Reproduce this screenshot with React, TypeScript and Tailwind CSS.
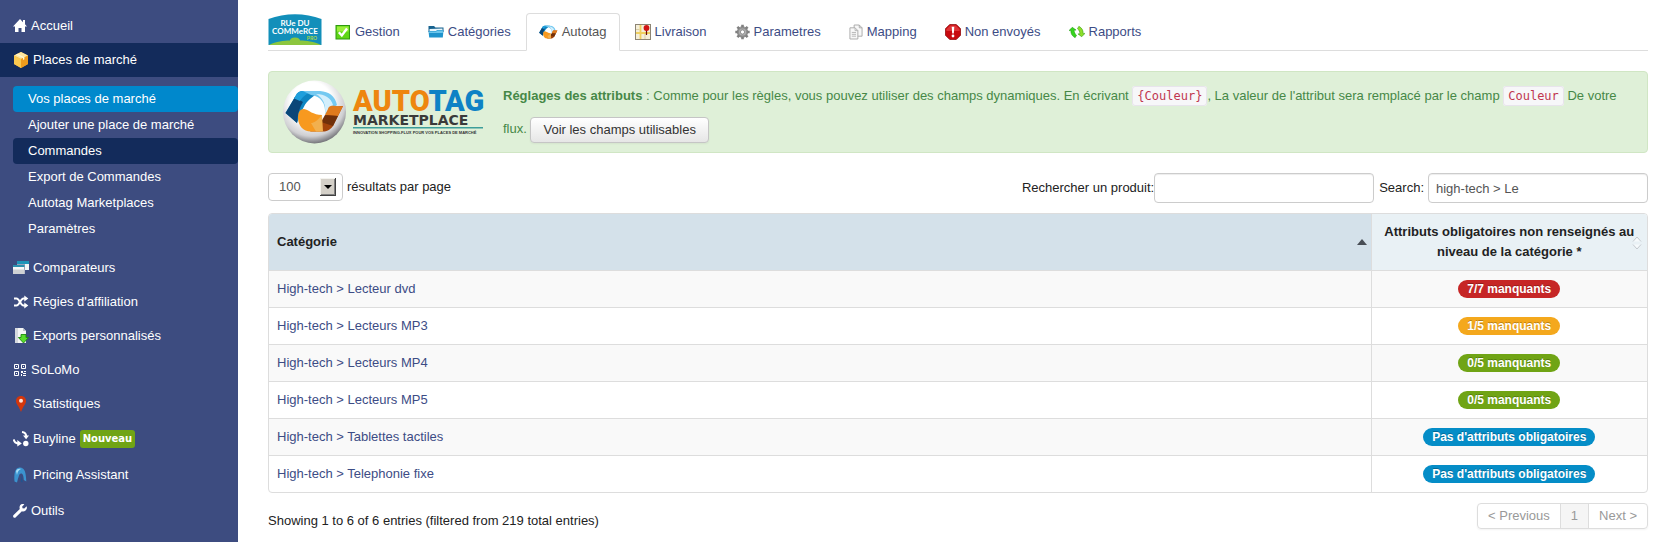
import type { ReactNode } from "react";

/* ---------- icons ---------- */

const HomeIcon = () => (
  <svg width="14" height="14" viewBox="0 0 14 14" fill="#fff">
    <path d="M7 0 10 3.200V1H12V5.300L14 7.500H12V13H8.500V9H5.500V13H2V7.500H0Z" />
  </svg>
);

const BoxIcon = () => (
  <svg width="16" height="16" viewBox="0 0 16 16">
    <path d="M8 0 15 3.4V12L8 16 1 12V3.4Z" fill="#f5b63a" />
    <path d="M8 0 15 3.4 8 7 1 3.4Z" fill="#ffe7a0" />
    <path d="M8 7 15 3.4V12L8 16Z" fill="#ef9c1c" />
    <path d="M1 3.4 8 7V16L1 12Z" fill="#fbc94f" />
    <path d="M4.3 1.8 11.4 5.3V7.3L10 8V6L3 2.5Z" fill="#fff6d2" />
  </svg>
);

const WindowsIcon = () => (
  <svg width="16" height="16" viewBox="0 0 16 16">
    <rect x="4" y="1" width="12" height="9" fill="#f2f5f6" />
    <rect x="4" y="1" width="12" height="3" fill="#1d94b8" />
    <rect x="0" y="4.500" width="12" height="9.500" fill="#3d4c80" />
    <rect x="0" y="5" width="11.500" height="9" fill="#f7f7f7" />
    <rect x="0" y="9.500" width="11.500" height="4.500" fill="#cfd1d3" />
    <rect x="0" y="5" width="11.500" height="2" fill="#2b8fae" />
  </svg>
);

const ShuffleIcon = () => (
  <svg width="16" height="14" viewBox="0 0 16 14" fill="none" stroke="#fff" strokeWidth="1.900">
    <path d="M1 3.500H3.500C6.500 3.500 7.500 10.500 10.500 10.500H12" />
    <path d="M1 10.500H3.500C6.500 10.500 7.500 3.500 10.500 3.500H12" />
    <path d="M11.300 .5 15.300 3.500 11.300 6.500ZM11.300 7.500 15.300 10.500 11.300 13.500Z" fill="#fff" stroke="none" />
  </svg>
);

const ExportIcon = () => (
  <svg width="16" height="16" viewBox="0 0 16 16">
    <path d="M2 0H10L13 3V15H2Z" fill="#f4f5f6" />
    <path d="M2 0H5V15H2Z" fill="#d5d9de" />
    <path d="M10 0 13 3H10Z" fill="#bcc3ca" />
    <path d="M8 6.500H13V9.500H15.600L10.500 15 5.400 9.500H8Z" fill="#58dc2c" stroke="#1d8a0d" strokeWidth="0.900" />
  </svg>
);

const QrIcon = () => (
  <svg width="14" height="14" viewBox="0 0 14 14">
    <path d="M1.500 1.500H5.500V5.500H1.500ZM8.500 1.500H12.500V5.500H8.500ZM1.500 8.500H5.500V12.500H1.500Z" fill="none" stroke="#fff" />
    <path
      d="M3 3H4V4H3ZM10 3H11V4H10ZM3 10H4V11H3ZM8 8H10V10H8ZM11 8H13V9H11ZM10 10H12V11H10ZM8 11H9V13H8ZM10 12H13V13H10ZM12 10H13V11H12Z"
      fill="#fff"
    />
  </svg>
);

const PinIcon = () => (
  <svg width="16" height="16" viewBox="0 0 16 16">
    <path d="M8 0C4.8 0 3 2.300 3 5c0 3.300 3.200 5.400 4.700 10.600h.6C9.800 10.400 13 8.300 13 5c0-2.700-1.800-5-5-5Z" fill="#d2360c" />
    <circle cx="8" cy="4.700" r="2" fill="#fbe3da" />
  </svg>
);

const BuylineIcon = () => (
  <svg width="16" height="16" viewBox="0 0 16 16" fill="none" stroke="#fff" strokeWidth="2">
    <path d="M9 1C12 1.300 13 2.500 13.200 5" />
    <path d="M10 4.500H16L13.100 8.200Z" fill="#fff" stroke="none" />
    <path d="M.8 8.500C1.200 11.500 3 12.300 5 12.500" />
    <path d="M4.300 9V15.500L8.800 12.500Z" fill="#fff" stroke="none" />
    <circle cx="12.800" cy="12.500" r="2.700" fill="#fff" stroke="none" />
  </svg>
);

const PricingIcon = () => (
  <svg width="16" height="16" viewBox="0 0 16 16">
    <path d="M1.500 14.500C1 7 1.500 1 6.500 .5 11.500 .2 13 5 13.300 14.500L10.800 13C10.500 9 10 6.500 8 6.500 6 6.500 6 9.500 5 11.500L4 15.500Z" fill="#3b93cf" />
    <path d="M3 4C4 1.800 6 1.300 8 2 6 2.500 4.500 4.500 4 8Z" fill="#a5dcf5" />
    <path d="M8.500 8 9.700 15.500 7.800 14.500Z" fill="#1d5590" />
  </svg>
);

const WrenchIcon = () => (
  <svg width="14" height="14" viewBox="0 0 14 14" fill="#fff">
    <path d="M13.600 2.300 11.300 4.500 9.500 4.200 9.200 2.600 11.300.4C9.500-.3 7.500.3 6.800 2 6.400 3 6.500 4 6.800 4.900L.6 11.100C-.1 11.800-.1 12.800.6 13.400 1.200 14 2.200 14 2.800 13.300L8.900 7.200C9.900 7.600 11.500 7.500 12.600 6.500 13.900 5.300 14.200 3.700 13.600 2.300Z" />
  </svg>
);

const CheckIcon = () => (
  <svg width="16" height="16" viewBox="0 0 16 16">
    <rect x="1" y="1.500" width="13.500" height="13.500" fill="#5fd616" stroke="#2f9a10" />
    <rect x="2" y="2.500" width="11.500" height="5" fill="#9bef3b" />
    <path d="M3.800 8.300 6.800 11.500 12 4.500" fill="none" stroke="#fff" strokeWidth="2.400" />
  </svg>
);

const FolderIcon = () => (
  <svg width="16" height="16" viewBox="0 0 16 16">
    <path d="M.5 2H6L7.500 3.500H15.500V8H.5Z" fill="#17628f" />
    <path d="M1.500 5 14.500 4.500V8H1.500Z" fill="#e7f5fb" />
    <path d="M.5 7H8L9.200 6H15.500L14.800 13.500H1.200Z" fill="#1f93cc" />
    <path d="M1 7.500H8.200L9.400 6.500H15L14.800 9H1.200Z" fill="#6cc6ec" />
  </svg>
);

const Ribbon = () => (
  <>
    <path d="M31 15 42 35 33 47 18 34Z" fill="#fff" />
    <path d="M2.500 34 14 14.500C16 12.500 18 12 20 12H37L27 20C22 24 19 31 16.500 38L14 44Z" fill="#0f86c2" />
    <path d="M2.500 34 12 18 20 23C17 28 15 33 14 44Z" fill="#0b4678" />
    <path d="M14 14.500C16 12.500 18 12 20 12H33C25 13 20 17 17 22L11 19.500Z" fill="#1f9fdc" />
    <path d="M20 12H37C46 12.500 52 17 54 26L48 31 42 35C43 25 38 17 28 16Z" fill="#74c9f1" />
    <path d="M33 15C42 15 48 19 50 26L42 35C43 25 40 19 33 15Z" fill="#d4effc" />
    <path d="M60 27 50 47C47 51 44 52.500 40 52.500H27L36 46C42 41 45 34 46 28Z" fill="#a3440a" />
    <path d="M60 27 55 37 42 36 46 28C49 25 53 28 60 27Z" fill="#e07a1c" />
    <path d="M42 36 55 37 50 47 38 43Z" fill="#70300a" />
    <path d="M15 39C15 33 17 30 21 30 26 31 30 36 39 36L37 52.500H28C20 52.500 15.500 47 15 39Z" fill="#f7991f" />
    <path d="M28 44C31 44 34 42 39 36L40 52.500H33Z" fill="#f2b04e" />
  </>
);

const RibbonIcon = () => (
  <svg width="19" height="16" viewBox="2 8 60 48">
    <Ribbon />
  </svg>
);

const MapIcon = () => (
  <svg width="16" height="16" viewBox="0 0 16 16">
    <rect x="0.500" y="0.500" width="15" height="15" fill="#f5efd9" stroke="#8d8574" />
    <path d="M1 9H15M5.500 1V15" stroke="#f0d060" strokeWidth="1.800" />
    <path d="M10 10V15M1 5.500H4.500" stroke="#d9cfa8" />
    <path d="M11.500 5V11" stroke="#6b0d0d" strokeWidth="1.200" />
    <circle cx="11.500" cy="4" r="2.900" fill="#d01414" />
  </svg>
);

const GearIcon = () => (
  <svg width="15" height="16" viewBox="0 0 15 16">
    <g stroke="#808080" strokeWidth="2.600">
      <path d="M7.500 .8V15.200M.3 8H14.700M2.400 2.900 12.600 13.100M12.600 2.900 2.400 13.100" />
    </g>
    <circle cx="7.500" cy="8" r="5.300" fill="#8f8f8f" stroke="#777" strokeWidth="0.600" />
    <circle cx="7.500" cy="8" r="3.600" fill="#b0b0b0" />
    <circle cx="7.500" cy="8" r="2.100" fill="#fff" stroke="#777" strokeWidth="0.700" />
  </svg>
);

const CopyIcon = () => (
  <svg width="14" height="16" viewBox="0.500 0 15 16" stroke="#a9a9a9" fill="#f8f8f8">
    <path d="M6 .5H11.500L14.500 3.500V12.500H6Z" />
    <path d="M11.500 .5V3.500H14.500" fill="none" />
    <path d="M1.500 3.500H7L10 6.500V15.500H1.500Z" />
    <path d="M7 3.500V6.500H10M3.500 8.500H8M3.500 10.500H8M3.500 12.500H8" fill="none" stroke="#b5b5b5" />
  </svg>
);

const StopIcon = () => (
  <svg width="16" height="16" viewBox="0 0 16 16">
    <path d="M4.800 .4H11.200L15.600 4.800V11.200L11.200 15.600H4.800L.4 11.200V4.800Z" fill="#c80a0f" stroke="#8c0a0d" strokeWidth="0.800" />
    <path d="M5.200 1.400H10.800L14.600 5.200V7H1.400V5.200Z" fill="#df3437" />
    <path d="M6.700 2.800H9.300L8.800 9.500H7.200Z" fill="#fff" />
    <circle cx="8" cy="12" r="1.400" fill="#fff" />
  </svg>
);

const RefreshIcon = () => (
  <svg width="16" height="16" viewBox="0 0 17 16" strokeWidth="0.600">
    <path d="M0 6.500 3.500 3 7.500 6H5.500C5.300 8.500 6.500 10.300 8 11.500L6.500 14C3.500 12.500 1.800 10 2 6.500Z" fill="#35d51d" stroke="#1f9a10" />
    <path d="M17 9.500 13.500 13 9.500 10H11.500C11.700 7.500 10.500 5.700 9 4.500L10.500 2C13.500 3.500 15.200 6 15 9.500Z" fill="#8ede2a" stroke="#2f9a12" />
  </svg>
);

/* ---------- logos ---------- */

const RueDuCommerceLogo = () => (
  <svg width="54" height="33" viewBox="0 0 54 33" role="img" aria-label="Rue du Commerce Pro">
    <path d="M.5 6C17 -.5 37 -.5 53.500 6V32H.5Z" fill="#128fba" />
    <path d="M1 32C8 28.500 16 27.500 22 27.500C22 26 23.500 24.500 27 24.500C30.500 24.500 32 26 32 27.500C38 27.500 46 28.500 53 32Z" fill="#8cc63e" />
    <g fill="#fff" fontFamily="Lato, sans-serif" fontWeight="700" textAnchor="middle">
      <text x="27" y="13" fontSize="8">RUe DU</text>
      <text x="27" y="21" fontSize="8">COMMeRCE</text>
    </g>
    <text x="44" y="27" fontSize="5" fontFamily="Lato, sans-serif" fontWeight="700" textAnchor="middle" fill="#a6d63e">
      PRO
    </text>
  </svg>
);

const AutotagLogo = () => (
  <svg width="204" height="66" viewBox="0 0 204 66" role="img" aria-label="Autotag Marketplace" className="shrink-0">
    <defs>
      <radialGradient id="ball" cx="0.450" cy="0.350" r="0.650">
        <stop offset="0.500" stopColor="#fff" />
        <stop offset="0.820" stopColor="#cfcfd2" />
        <stop offset="1" stopColor="#77777c" />
      </radialGradient>
    </defs>
    <circle cx="31.500" cy="33" r="31.500" fill="url(#ball)" />
    <Ribbon />
    <text x="70" y="32" fontSize="29" fontWeight="900" fontFamily="Roboto, sans-serif" fill="#ee860f">
      AUTO<tspan fill="#0e82c5">TAG</tspan>
    </text>
    <text x="70" y="46" fontSize="14" fontWeight="700" fontFamily="'DejaVu Sans', sans-serif" fill="#3a3a3a">
      MARKETPLACE
    </text>
    <rect x="70" y="48" width="130" height="1.500" fill="#3d9e9a" />
    <text x="70" y="55" fontSize="4" fontWeight="700" fontFamily="'Liberation Sans', sans-serif" fill="#333">
      INNOVATION SHOPPING-FLUX POUR VOS PLACES DE MARCHÉ
    </text>
  </svg>
);

/* ---------- sidebar ---------- */

type NavItem = { label: string; icon: ReactNode; tall?: boolean; badge?: string };

const subItems = [
  { label: "Vos places de marché", style: "bg-[#0088cc]" },
  { label: "Ajouter une place de marché", style: "" },
  { label: "Commandes", style: "bg-[#132b5b]" },
  { label: "Export de Commandes", style: "" },
  { label: "Autotag Marketplaces", style: "" },
  { label: "Paramètres", style: "" },
];

const navItems: NavItem[] = [
  { label: "Comparateurs", icon: <WindowsIcon /> },
  { label: "Régies d'affiliation", icon: <ShuffleIcon /> },
  { label: "Exports personnalisés", icon: <ExportIcon /> },
  { label: "SoLoMo", icon: <QrIcon /> },
  { label: "Statistiques", icon: <PinIcon /> },
  { label: "Buyline", icon: <BuylineIcon />, badge: "Nouveau", tall: true },
  { label: "Pricing Assistant", icon: <PricingIcon />, tall: true },
  { label: "Outils", icon: <WrenchIcon />, tall: true },
];

const Sidebar = () => (
  <nav className="w-[238px] shrink-0 bg-[#3d4c80] pt-[9px] text-white">
    <a href="#" className="flex h-[34px] items-center gap-1 pl-[13px]">
      <HomeIcon />
      Accueil
    </a>
    <a href="#" className="flex h-[34px] items-center gap-1 bg-[#132b5b] pl-[13px]">
      <BoxIcon />
      Places de marché
    </a>
    <ul className="py-[9px] pl-[13px]">
      {subItems.map((item) => (
        <li key={item.label}>
          <a href="#" className={`flex h-[26px] items-center rounded pl-[15px] ${item.style}`}>
            {item.label}
          </a>
        </li>
      ))}
    </ul>
    <ul>
      {navItems.map((item) => (
        <li key={item.label}>
          <a href="#" className={`flex items-center gap-1 pl-[13px] ${item.tall ? "h-9" : "h-[34px]"}`}>
            {item.icon}
            {item.label}
            {item.badge && (
              <span className="rounded-[3px] bg-[#70a415] px-[3px] font-['DejaVu_Sans',sans-serif] text-[10px] leading-[18px] font-bold">
                {item.badge}
              </span>
            )}
          </a>
        </li>
      ))}
    </ul>
  </nav>
);

/* ---------- main area ---------- */

const tabs: { label: string; icon: ReactNode; active?: boolean }[] = [
  { label: "Gestion", icon: <CheckIcon /> },
  { label: "Catégories", icon: <FolderIcon /> },
  { label: "Autotag", icon: <RibbonIcon />, active: true },
  { label: "Livraison", icon: <MapIcon /> },
  { label: "Parametres", icon: <GearIcon /> },
  { label: "Mapping", icon: <CopyIcon /> },
  { label: "Non envoyés", icon: <StopIcon /> },
  { label: "Rapports", icon: <RefreshIcon /> },
];

const Tabs = () => (
  <div className="flex items-start border-b border-[#ddd]">
    <RueDuCommerceLogo />
    <div className="-mb-px flex gap-0.5">
      {tabs.map((tab) => (
        <a
          key={tab.label}
          href="#"
          className={`flex h-[38px] items-center gap-1 rounded-t border px-3 ${
            tab.active ? "border-[#ddd] border-b-white bg-white text-[#555]" : "border-transparent text-[#3d4c85]"
          }`}
        >
          {tab.icon}
          {tab.label}
        </a>
      ))}
    </div>
  </div>
);

const Code = ({ children }: { children: ReactNode }) => (
  <code className="rounded-[3px] border border-[#e8e4ec] bg-[#f7f7f9] px-1 py-0.5 font-['DejaVu_Sans_Mono',monospace] text-[12px] leading-none text-[#c0364f]">
    {children}
  </code>
);

const Banner = () => (
  <section className="mt-5 flex items-start gap-4 rounded border border-[#d0e6c4] bg-[#dff0d8] py-[7px] pr-4 pl-[14px] text-[#468847]">
    <AutotagLogo />
    <p className="leading-[33px]">
      <strong>Réglages des attributs</strong> : Comme pour les règles, vous pouvez utiliser des champs dynamiques. En
      écrivant <Code>{"{Couleur}"}</Code>, La valeur de l'attribut sera remplacé par le champ <Code>Couleur</Code> De
      votre flux.{" "}
      <button
        type="button"
        className="h-[26px] rounded border border-[#c5c5c5] bg-linear-to-b from-white to-[#e6e6e6] px-3 align-middle leading-6 text-[#333] shadow-xs"
      >
        Voir les champs utilisables
      </button>
    </p>
  </section>
);

const fieldStyle = "rounded border border-[#ccc] bg-white text-[#555] shadow-[inset_0_1px_1px_rgba(0,0,0,0.075)]";

const Controls = () => (
  <div className="mt-5 flex items-start justify-between">
    <div className="flex h-7 items-center gap-1">
      <div className="relative">
        <select
          id="page-size"
          defaultValue="100"
          className="h-7 w-[75px] appearance-none rounded border border-[#ccc] bg-white pl-[10px] text-[#555]"
        >
          <option>25</option>
          <option>50</option>
          <option>100</option>
        </select>
        <svg width="16" height="18" viewBox="0 0 16 18" className="pointer-events-none absolute top-[5px] right-[7px]">
          <rect width="16" height="18" fill="#404040" />
          <rect width="15" height="17" fill="#f4f3ee" />
          <rect x="1" y="1" width="14" height="16" fill="#808080" />
          <rect x="1" y="1" width="13" height="15" fill="#d4d0c8" />
          <path d="M4 7H12L8 11Z" fill="#000" />
        </svg>
      </div>
      <label htmlFor="page-size">résultats par page</label>
    </div>
    <div className="flex items-center">
      <label htmlFor="product">Rechercher un produit:</label>
      <input id="product" type="text" className={`mr-[5px] h-[30px] w-[220px] px-2 ${fieldStyle}`} />
      <label htmlFor="search" className="mr-1">
        Search:
      </label>
      <input id="search" type="text" defaultValue="high-tech > Le" className={`h-[30px] w-[220px] px-[7px] ${fieldStyle}`} />
    </div>
  </div>
);

const rows = [
  { name: "High-tech > Lecteur dvd", status: "7/7 manquants", color: "bg-[#c62626]" },
  { name: "High-tech > Lecteurs MP3", status: "1/5 manquants", color: "bg-[#f4a81d]" },
  { name: "High-tech > Lecteurs MP4", status: "0/5 manquants", color: "bg-[#70a415]" },
  { name: "High-tech > Lecteurs MP5", status: "0/5 manquants", color: "bg-[#70a415]" },
  { name: "High-tech > Tablettes tactiles", status: "Pas d'attributs obligatoires", color: "bg-[#058dc7]" },
  { name: "High-tech > Telephonie fixe", status: "Pas d'attributs obligatoires", color: "bg-[#058dc7]" },
];

const CategoryTable = () => (
  <div className="mt-[10px] overflow-hidden rounded border border-[#ddd]">
    <table className="w-full table-fixed border-collapse">
      <thead>
        <tr className="h-14">
          <th className="bg-[#d4e1ea] px-2 text-left">
            <div className="flex items-center justify-between">
              Catégorie
              <svg width="10" height="6" viewBox="0 0 10 6" className="-mr-1">
                <path d="M5 0 10 6H0Z" fill="#484d55" />
              </svg>
            </div>
          </th>
          <th className="relative w-[276px] border-l border-[#ddd] bg-[#e9f1f5] px-2 leading-5">
            Attributs obligatoires non renseignés au niveau de la catégorie *
            <svg
              width="10"
              height="14"
              viewBox="0 0 10 14"
              className="absolute top-[22px] right-[5px]"
              fill="#f6fafc"
              stroke="#c3c8cd"
            >
              <path d="M1 5.500 5 1 9 5.500M1 8.500 5 13 9 8.500" />
            </svg>
          </th>
        </tr>
      </thead>
      <tbody>
        {rows.map((row) => (
          <tr key={row.name} className="h-[37px] border-t border-[#ddd] odd:bg-[#f9f9f9]">
            <td className="px-2">
              <a href="#" className="text-[#3d4c85]">
                {row.name}
              </a>
            </td>
            <td className="border-l border-[#ddd] px-2 text-center">
              <span
                className={`inline-block rounded-full px-[9px] text-[12px] leading-[18px] font-bold text-white [text-shadow:0_-1px_0_rgba(0,0,0,0.25)] ${row.color}`}
              >
                {row.status}
              </span>
            </td>
          </tr>
        ))}
      </tbody>
    </table>
  </div>
);

const Footer = () => (
  <div className="mt-[10px] flex items-start justify-between">
    <p className="pt-2 leading-5">Showing 1 to 6 of 6 entries (filtered from 219 total entries)</p>
    <div className="flex h-[26px] divide-x divide-[#ddd] overflow-hidden rounded border border-[#ddd] text-[#999] shadow-xs">
      <button type="button" className="px-[10px]">
        &lt; Previous
      </button>
      <button type="button" className="bg-[#f5f5f5] px-[10px]">
        1
      </button>
      <button type="button" className="px-[10px]">
        Next &gt;
      </button>
    </div>
  </div>
);

export default function App() {
  return (
    <div className="flex min-h-screen bg-white font-['Liberation_Sans',Arial,sans-serif] text-[13px] leading-5 text-[#222]">
      <Sidebar />
      <main className="min-w-0 flex-1 pt-[13px] pr-[19px] pl-[30px]">
        <Tabs />
        <Banner />
        <Controls />
        <CategoryTable />
        <Footer />
      </main>
    </div>
  );
}
